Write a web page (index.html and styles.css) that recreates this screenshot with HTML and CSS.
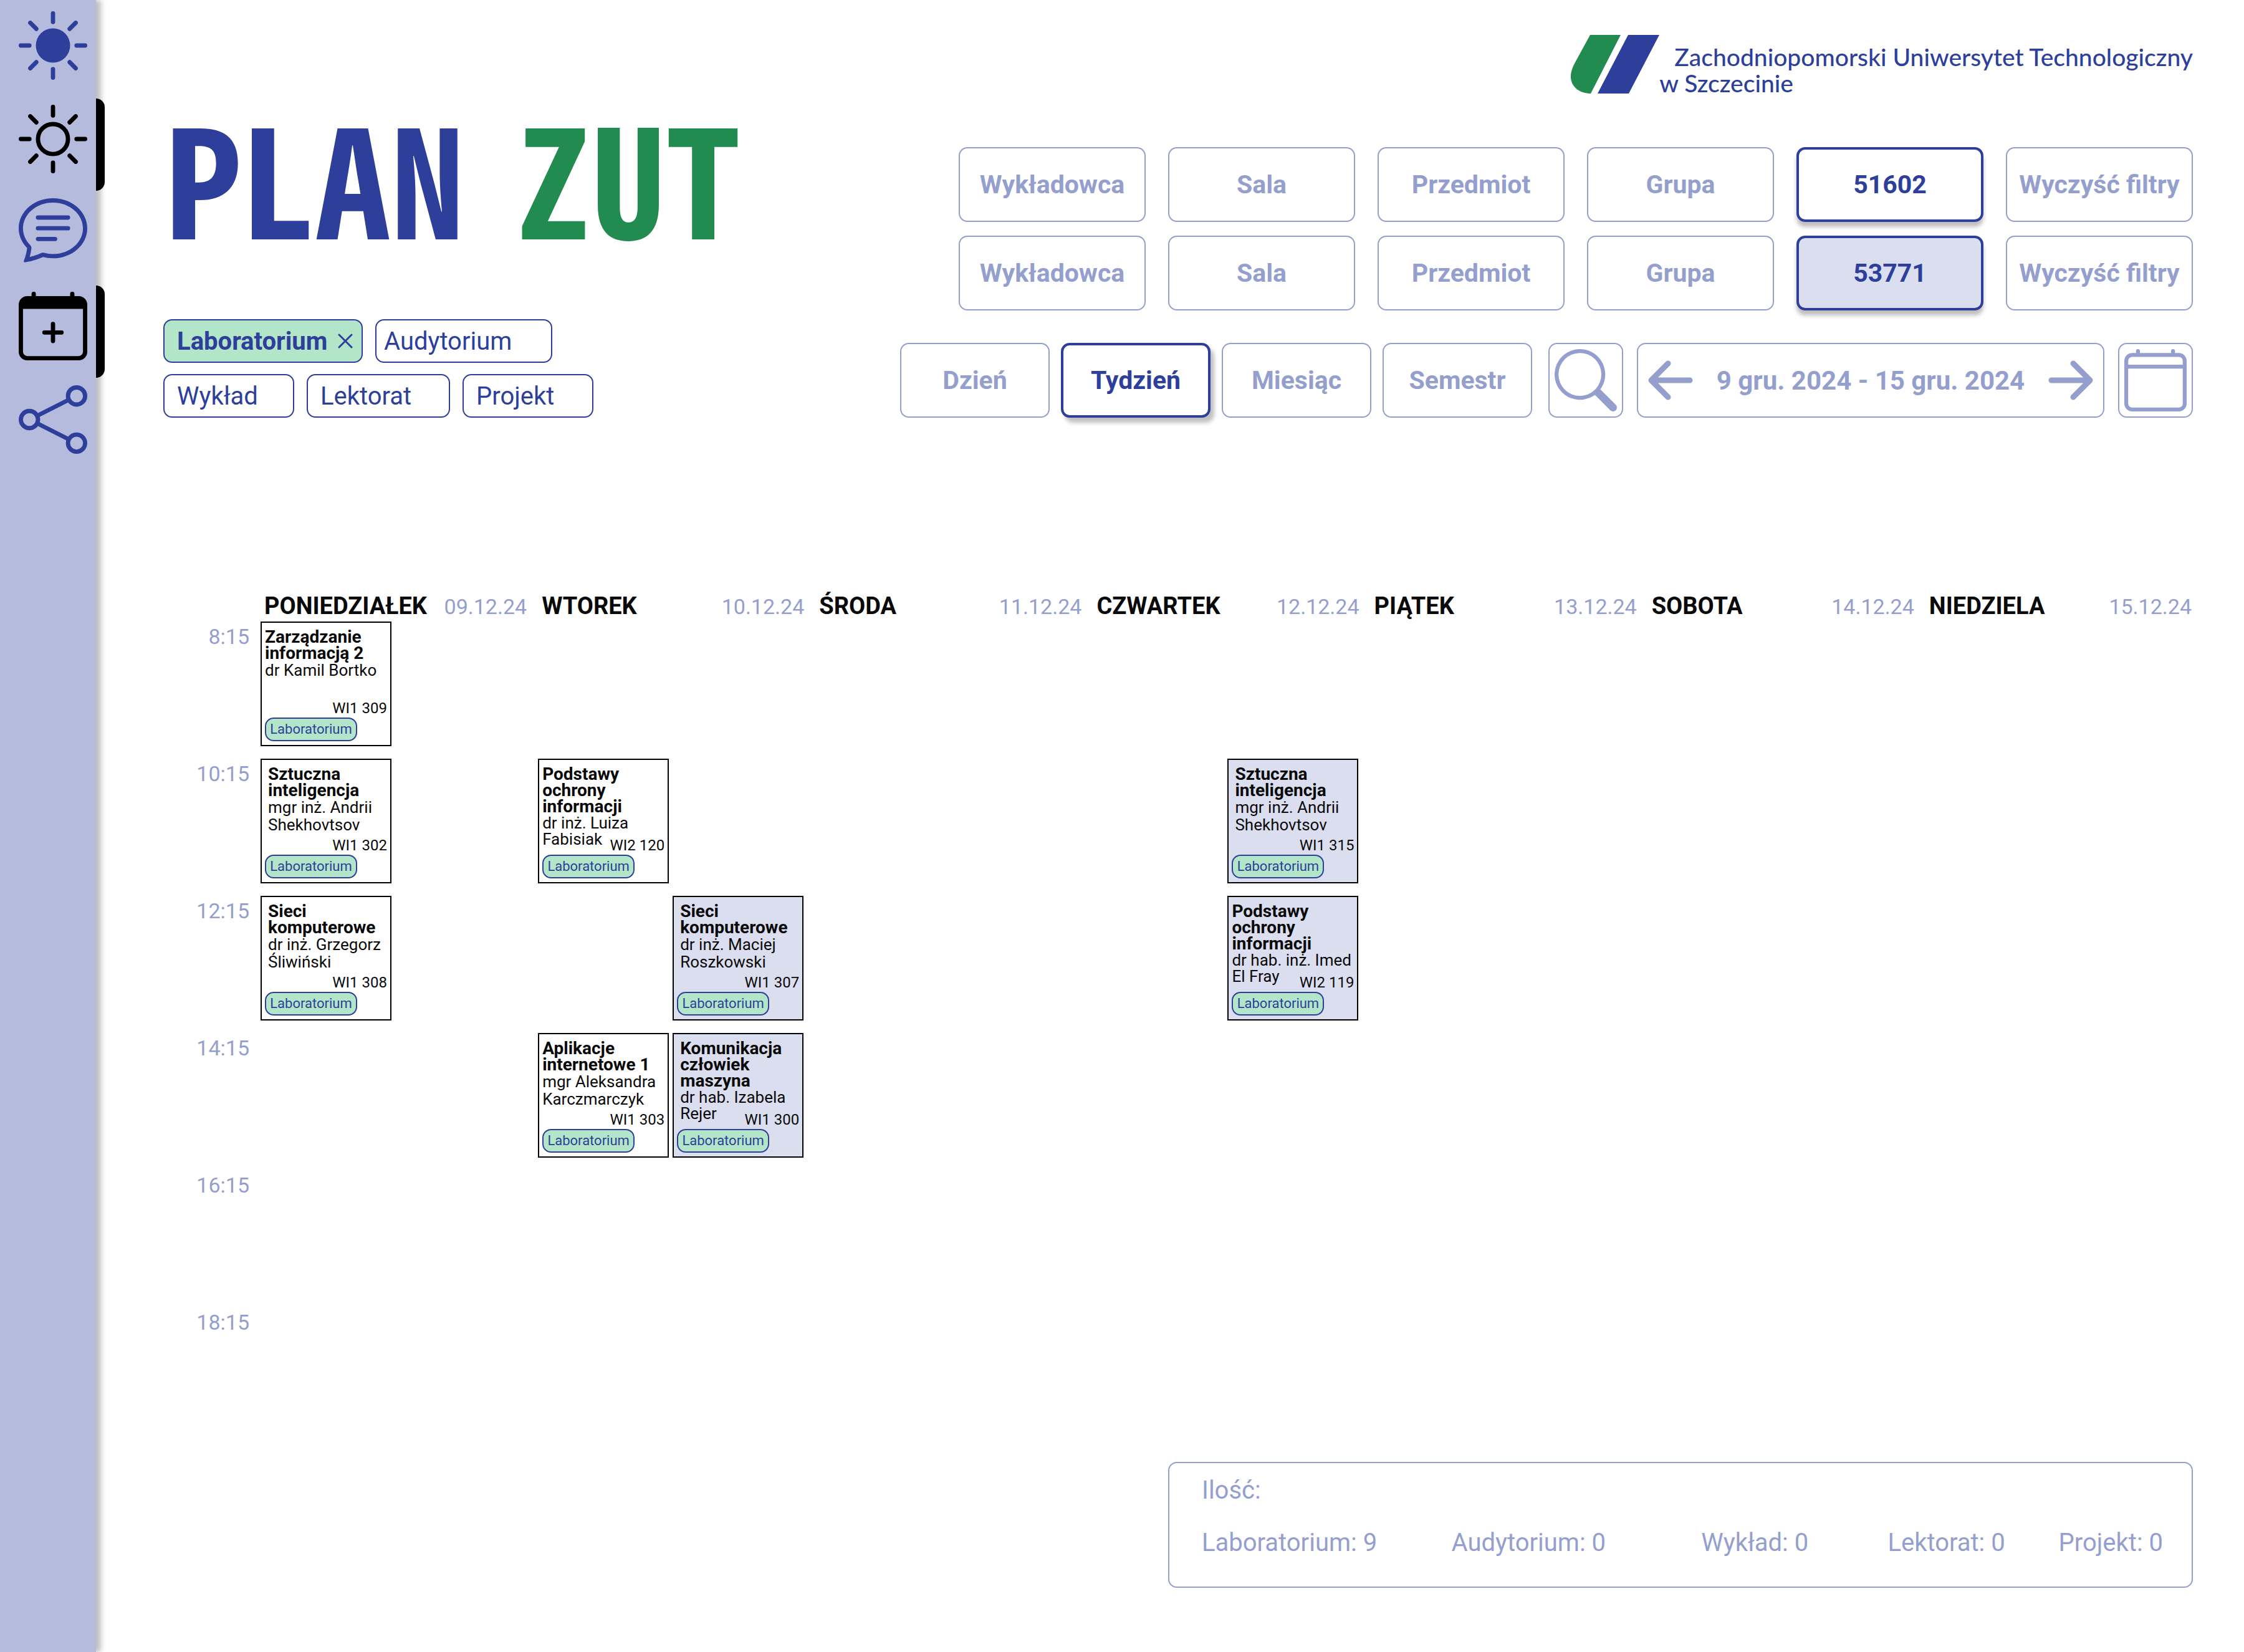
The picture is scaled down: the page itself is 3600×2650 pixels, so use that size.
FILE: index.html
```html
<!DOCTYPE html>
<html lang="pl">
<head>
<meta charset="utf-8">
<meta name="viewport" content="width=device-width, initial-scale=1">
<title>Plan ZUT</title>
<link rel="stylesheet" href="styles.css">
</head>
<body>
<nav class="sidebar" aria-label="Narzędzia">
  <button class="tool" type="button" aria-label="Motyw kolorowy">
    <svg class="icon" viewBox="0 0 16 16" fill="none" stroke="currentColor" stroke-linecap="round"><circle cx="8" cy="8" r="4" fill="currentColor" stroke="none"/><path d="M8 .5v2M8 13.5v2M.5 8h2M13.5 8h2M2.697 2.697l1.414 1.414M11.889 11.889l1.414 1.414M13.303 2.697l-1.414 1.414M4.111 11.889l-1.414 1.414"/></svg>
  </button>
  <button class="tool tool--active" type="button" aria-label="Jasny motyw" aria-pressed="true">
    <svg class="icon" viewBox="0 0 16 16" fill="none" stroke="currentColor" stroke-linecap="round"><circle cx="8" cy="8" r="3.5"/><path d="M8 .5v2M8 13.5v2M.5 8h2M13.5 8h2M2.697 2.697l1.414 1.414M11.889 11.889l1.414 1.414M13.303 2.697l-1.414 1.414M4.111 11.889l-1.414 1.414"/></svg>
  </button>
  <button class="tool" type="button" aria-label="Wiadomości">
    <svg class="icon" viewBox="0 1 16 16" fill="currentColor"><path d="M2.678 11.894a1 1 0 0 1 .287.801 11 11 0 0 1-.398 2c1.395-.323 2.247-.697 2.634-.893a1 1 0 0 1 .71-.074A8 8 0 0 0 8 14c3.996 0 7-2.807 7-6s-3.004-6-7-6-7 2.808-7 6c0 1.468.617 2.83 1.678 3.894m-.493 3.905a22 22 0 0 1-.713.129c-.2.032-.352-.176-.273-.362a10 10 0 0 0 .244-.637l.003-.01c.248-.72.45-1.548.524-2.319C.743 11.37 0 9.76 0 8c0-3.866 3.582-7 8-7s8 3.134 8 7-3.582 7-8 7a9 9 0 0 1-2.347-.306c-.52.263-1.639.742-3.468 1.105"/><path d="M4.5 5.5h7M4.5 8h7M4.5 10.500h4" stroke="currentColor" stroke-linecap="round"/></svg>
  </button>
  <button class="tool tool--active" type="button" aria-label="Dodaj do kalendarza" aria-pressed="true">
    <svg class="icon" viewBox="0 0 16 16" fill="currentColor"><path d="M8 7a.5.5 0 0 1 .5.5V9H10a.5.5 0 0 1 0 1H8.500v1.500a.5.5 0 0 1-1 0V10H6a.5.5 0 0 1 0-1h1.500V7.500A.5.5 0 0 1 8 7"/><path d="M3.500 0a.5.5 0 0 1 .5.5V1h8V.5a.5.5 0 0 1 1 0V1h1a2 2 0 0 1 2 2v11a2 2 0 0 1-2 2H2a2 2 0 0 1-2-2V3a2 2 0 0 1 2-2h1V.5a.5.5 0 0 1 .5-.5M1 4v10a1 1 0 0 0 1 1h12a1 1 0 0 0 1-1V4z"/></svg>
  </button>
  <button class="tool" type="button" aria-label="Udostępnij">
    <svg class="icon" viewBox="0 0 16 16" fill="none" stroke="currentColor"><circle cx="13.500" cy="2.500" r="2"/><circle cx="13.500" cy="13.500" r="2"/><circle cx="2.500" cy="8" r="2"/><path d="M4.300 7.120l7.400-3.740M4.300 8.880l7.400 3.740"/></svg>
  </button>
</nav>

<main class="page">
  <header class="header">
    <div class="intro">
      <h1 class="title"><span class="title__plan">PLAN</span> <span class="title__zut">ZUT</span></h1>
      <div class="types" role="group" aria-label="Rodzaj zajęć">
        <div class="types__row">
          <button class="type type--on" type="button" aria-pressed="true">Laboratorium<svg class="type__close" viewBox="0 0 24 24" fill="none" stroke="currentColor" stroke-width="3" stroke-linecap="round" aria-hidden="true"><path d="M2 2l20 20M22 2L2 22"/></svg></button>
          <button class="type type--lg" type="button">Audytorium</button>
        </div>
        <div class="types__row">
          <button class="type type--sm" type="button">Wykład</button>
          <button class="type type--md" type="button">Lektorat</button>
          <button class="type type--sm" type="button">Projekt</button>
        </div>
      </div>
    </div>

    <div class="controls">
      <div class="brand">
        <svg class="brand__mark" viewBox="0 0 142 94" aria-hidden="true"><path fill="#228b50" d="M31 0h49L32 94C10 94-6 78 2 55Q4 49 7 44z"/><path fill="#2d3f9b" d="M92 0h50L93 94H43z"/></svg>
        <p class="brand__name"><span class="brand__lead">Zachodniopomorski Uniwersytet Technologiczny</span><span>w Szczecinie</span></p>
      </div>

      <form class="filters">
        <input class="box field" type="text" placeholder="Wykładowca" aria-label="Wykładowca, plan 1">
        <input class="box field" type="text" placeholder="Sala" aria-label="Sala, plan 1">
        <input class="box field" type="text" placeholder="Przedmiot" aria-label="Przedmiot, plan 1">
        <input class="box field" type="text" placeholder="Grupa" aria-label="Grupa, plan 1">
        <input class="box field box--active" type="text" value="51602" aria-label="Numer albumu, plan 1">
        <button class="box" type="reset">Wyczyść filtry</button>
        <input class="box field" type="text" placeholder="Wykładowca" aria-label="Wykładowca, plan 2">
        <input class="box field" type="text" placeholder="Sala" aria-label="Sala, plan 2">
        <input class="box field" type="text" placeholder="Przedmiot" aria-label="Przedmiot, plan 2">
        <input class="box field" type="text" placeholder="Grupa" aria-label="Grupa, plan 2">
        <input class="box field box--active box--second" type="text" value="53771" aria-label="Numer albumu, plan 2">
        <button class="box" type="reset">Wyczyść filtry</button>
      </form>

      <div class="range">
        <div class="views" role="group" aria-label="Widok">
          <button class="box" type="button">Dzień</button>
          <button class="box box--active box--view" type="button" aria-pressed="true">Tydzień</button>
          <button class="box" type="button">Miesiąc</button>
          <button class="box" type="button">Semestr</button>
        </div>
        <div class="period">
          <button class="box" type="button" aria-label="Szukaj"><svg class="box__icon" viewBox="0 0 16 16" fill="currentColor"><path d="M11.742 10.344a6.500 6.500 0 1 0-1.397 1.398h-.001q.044.06.098.115l3.850 3.850a1 1 0 0 0 1.415-1.414l-3.850-3.850a1 1 0 0 0-.115-.1zM12 6.500a5.500 5.500 0 1 1-11 0 5.500 5.500 0 0 1 11 0"/></svg></button>
          <div class="box dates">
            <button class="arrow" type="button" aria-label="Poprzedni tydzień"><svg class="arrow__icon" viewBox="0 0 72 64" fill="none" stroke="currentColor" stroke-width="9" stroke-linecap="round" stroke-linejoin="round"><path d="M67 32H6M32 5L5 32l27 27"/></svg></button>
            <span>9 gru. 2024 - 15 gru. 2024</span>
            <button class="arrow" type="button" aria-label="Następny tydzień"><svg class="arrow__icon" viewBox="0 0 72 64" fill="none" stroke="currentColor" stroke-width="9" stroke-linecap="round" stroke-linejoin="round"><path d="M5 32h61M40 5l27 27-27 27"/></svg></button>
          </div>
          <button class="box" type="button" aria-label="Wybierz datę"><svg class="box__icon" viewBox="0 0 16 16" fill="currentColor"><path d="M3.500 0a.5.5 0 0 1 .5.5V1h8V.5a.5.5 0 0 1 1 0V1h1a2 2 0 0 1 2 2v11a2 2 0 0 1-2 2H2a2 2 0 0 1-2-2V3a2 2 0 0 1 2-2h1V.5a.5.5 0 0 1 .5-.5M2 2a1 1 0 0 0-1 1v1h14V3a1 1 0 0 0-1-1zm13 3H1v9a1 1 0 0 0 1 1h12a1 1 0 0 0 1-1z"/></svg></button>
        </div>
      </div>
    </div>
  </header>

  <table class="week">
    <thead>
      <tr>
        <td class="week__corner"></td>
        <th scope="col"><div class="day"><span>PONIEDZIAŁEK</span><time class="day__date">09.12.24</time></div></th>
        <th scope="col"><div class="day"><span>WTOREK</span><time class="day__date">10.12.24</time></div></th>
        <th scope="col"><div class="day"><span>ŚRODA</span><time class="day__date">11.12.24</time></div></th>
        <th scope="col"><div class="day"><span>CZWARTEK</span><time class="day__date">12.12.24</time></div></th>
        <th scope="col"><div class="day"><span>PIĄTEK</span><time class="day__date">13.12.24</time></div></th>
        <th scope="col"><div class="day"><span>SOBOTA</span><time class="day__date">14.12.24</time></div></th>
        <th scope="col"><div class="day"><span>NIEDZIELA</span><time class="day__date">15.12.24</time></div></th>
      </tr>
    </thead>
    <tbody>
      <tr>
        <th class="hour" scope="row">8:15</th>
        <td><div class="slots">
          <article class="card"><div class="card__info"><h2 class="card__name">Zarządzanie<br>informacją 2</h2><p class="card__who">dr Kamil Bortko</p></div><div class="card__foot"><span class="card__room">WI1 309</span><span class="tag">Laboratorium</span></div></article>
        </div></td>
        <td></td><td></td><td></td><td></td><td></td><td></td>
      </tr>
      <tr>
        <th class="hour" scope="row">10:15</th>
        <td><div class="slots">
          <article class="card card--inset"><div class="card__info"><h2 class="card__name">Sztuczna<br>inteligencja</h2><p class="card__who">mgr inż. Andrii<br>Shekhovtsov</p></div><div class="card__foot"><span class="card__room">WI1 302</span><span class="tag">Laboratorium</span></div></article>
        </div></td>
        <td><div class="slots">
          <article class="card card--tight"><div class="card__info"><h2 class="card__name">Podstawy<br>ochrony<br>informacji</h2><p class="card__who">dr inż. Luiza<br>Fabisiak</p></div><div class="card__foot"><span class="card__room">WI2 120</span><span class="tag">Laboratorium</span></div></article>
        </div></td>
        <td></td>
        <td><div class="slots">
          <article class="card card--second card--inset"><div class="card__info"><h2 class="card__name">Sztuczna<br>inteligencja</h2><p class="card__who">mgr inż. Andrii<br>Shekhovtsov</p></div><div class="card__foot"><span class="card__room">WI1 315</span><span class="tag">Laboratorium</span></div></article>
        </div></td>
        <td></td><td></td><td></td>
      </tr>
      <tr>
        <th class="hour" scope="row">12:15</th>
        <td><div class="slots">
          <article class="card card--inset"><div class="card__info"><h2 class="card__name">Sieci<br>komputerowe</h2><p class="card__who">dr inż. Grzegorz<br>Śliwiński</p></div><div class="card__foot"><span class="card__room">WI1 308</span><span class="tag">Laboratorium</span></div></article>
        </div></td>
        <td><div class="slots">
          <article class="card card--second card--inset"><div class="card__info"><h2 class="card__name">Sieci<br>komputerowe</h2><p class="card__who">dr inż. Maciej<br>Roszkowski</p></div><div class="card__foot"><span class="card__room">WI1 307</span><span class="tag">Laboratorium</span></div></article>
        </div></td>
        <td></td>
        <td><div class="slots">
          <article class="card card--second card--tight"><div class="card__info"><h2 class="card__name">Podstawy<br>ochrony<br>informacji</h2><p class="card__who">dr hab. inż. Imed<br>El Fray</p></div><div class="card__foot"><span class="card__room">WI2 119</span><span class="tag">Laboratorium</span></div></article>
        </div></td>
        <td></td><td></td><td></td>
      </tr>
      <tr>
        <th class="hour" scope="row">14:15</th>
        <td></td>
        <td><div class="slots">
          <article class="card"><div class="card__info"><h2 class="card__name">Aplikacje<br>internetowe 1</h2><p class="card__who">mgr Aleksandra<br>Karczmarczyk</p></div><div class="card__foot"><span class="card__room">WI1 303</span><span class="tag">Laboratorium</span></div></article>
          <article class="card card--second card--inset card--tight"><div class="card__info"><h2 class="card__name">Komunikacja<br>człowiek<br>maszyna</h2><p class="card__who">dr hab. Izabela<br>Rejer</p></div><div class="card__foot"><span class="card__room">WI1 300</span><span class="tag">Laboratorium</span></div></article>
        </div></td>
        <td></td><td></td><td></td><td></td><td></td>
      </tr>
      <tr><th class="hour" scope="row">16:15</th><td></td><td></td><td></td><td></td><td></td><td></td><td></td></tr>
      <tr><th class="hour" scope="row">18:15</th><td></td><td></td><td></td><td></td><td></td><td></td><td></td></tr>
    </tbody>
  </table>

  <section class="summary">
    <h2 class="summary__title">Ilość:</h2>
    <ul class="summary__list">
      <li>Laboratorium: 9</li>
      <li>Audytorium: 0</li>
      <li>Wykład: 0</li>
      <li>Lektorat: 0</li>
      <li>Projekt: 0</li>
    </ul>
  </section>
</main>
</body>
</html>
```
FILE: styles.css
```css
:root {
  --blue: #2d3f9b;
  --blue-soft: #959fce;
  --blue-bar: #b5bbdc;
  --blue-pale: #dbdeef;
  --green: #228b50;
  --green-pale: #b3e6c9;
}

* { box-sizing: border-box; }

body {
  margin: 0;
  min-height: 100vh;
  display: flex;
  background: #fff;
  color: #0a0a0a;
  font-family: Roboto, "Noto Sans", sans-serif;
  font-size: 40px;
}

h1, h2, p, ul { margin: 0; padding: 0; }

button, input { font: inherit; color: inherit; }

button { cursor: pointer; }

/* Sidebar */
.sidebar {
  flex: 0 0 154px;
  display: flex;
  flex-direction: column;
  gap: 40px;
  padding-top: 18px;
  background: var(--blue-bar);
  box-shadow: 8px 0 8px rgba(0, 0, 0, .25);
}

.tool {
  position: relative;
  display: block;
  width: 100%;
  height: 110px;
  padding: 0 14px 0 30px;
  border: 0;
  background: none;
  color: var(--blue);
}

.tool--active { color: #000; }

.tool--active::after {
  content: "";
  position: absolute;
  top: -10px;
  right: -14px;
  width: 14px;
  height: 148px;
  border-radius: 0 14px 14px 0;
  background: #000;
}

.icon { display: block; width: 110px; height: 110px; }

/* Page */
.page {
  flex: 1;
  min-width: 0;
  display: flex;
  flex-direction: column;
  padding: 56px 82px 56px 108px;
}

.header {
  display: grid;
  grid-template-columns: 1182fr 2074fr;
}

.intro {
  display: flex;
  flex-direction: column;
  justify-content: space-between;
}

.title {
  display: flex;
  gap: 82px;
  padding: 100px 0 0 4px;
  font-family: "Noto Sans CJK SC", sans-serif;
  font-size: 240px;
  line-height: 248px;
  font-weight: 700;
  font-feature-settings: "hwid";
  white-space: nowrap;
}

.title__plan { color: var(--blue); }
.title__zut { color: var(--green); }

.types { display: grid; gap: 18px; }

.types__row { display: flex; gap: 20px; }

.type {
  display: flex;
  align-items: center;
  height: 70px;
  padding: 0 20px;
  border: 2px solid var(--blue);
  border-radius: 14px;
  background: #fff;
  color: var(--blue);
}

.type--on {
  width: 320px;
  justify-content: space-between;
  padding-right: 14px;
  background: var(--green-pale);
  font-weight: 700;
}

.type--lg { width: 284px; padding: 0 12px; }
.type--md { width: 230px; }
.type--sm { width: 210px; }

.type__close { width: 24px; height: 24px; }

/* Controls */
.brand {
  display: flex;
  justify-content: flex-end;
  margin-bottom: 82px;
}

.brand__mark { width: 142px; height: 94px; }

.brand__name {
  display: flex;
  flex-direction: column;
  padding-top: 14px;
  color: var(--blue);
  font-family: Lato, sans-serif;
  font-size: 39px;
  line-height: 42px;
  font-weight: 500;
}

.brand__lead { padding-left: 24px; }

.filters {
  display: grid;
  grid-template-columns: repeat(6, 1fr);
  gap: 22px 36px;
  margin: 0 0 52px 94px;
}

.box {
  display: flex;
  align-items: center;
  justify-content: center;
  width: 100%;
  height: 120px;
  padding: 0;
  border: 2px solid var(--blue-soft);
  border-radius: 14px;
  background: #fff;
  color: var(--blue-soft);
  font-size: 41px;
  font-weight: 700;
  white-space: nowrap;
}

.field { text-align: center; }

.field::placeholder { color: var(--blue-soft); opacity: 1; }

.box--active {
  border: 4px solid var(--blue);
  color: var(--blue);
  box-shadow: 0 8px 6px rgba(0, 0, 0, .25);
}

.box--view { box-shadow: 6px 8px 6px rgba(0, 0, 0, .25); }

.box--second { background: var(--blue-pale); }

.box__icon { width: 100px; height: 100px; }

.range { display: grid; grid-template-columns: 1014fr 1034fr; gap: 26px; }

.views { display: grid; grid-template-columns: repeat(4, 1fr); gap: 18px; }

.period { display: grid; grid-template-columns: 120px 1fr 120px; gap: 22px; }

.dates {
  justify-content: space-between;
  padding: 0 16px;
  font-size: 42px;
}

.arrow { padding: 0; border: 0; background: none; color: inherit; }

.arrow__icon { display: block; width: 72px; height: 64px; }

/* Week grid */
.week {
  width: calc(100% + 16px);
  margin: 276px -16px 0 0;
  table-layout: fixed;
  border-collapse: collapse;
}

.week th, .week td {
  padding: 0;
  vertical-align: top;
  text-align: left;
}

.week thead tr { height: 50px; }
.week tbody tr { height: 220px; }

.week .week__corner { width: 156px; }

.day {
  display: flex;
  align-items: baseline;
  justify-content: space-between;
  padding: 2px 18px 0 6px;
  font-size: 38px;
  line-height: 48px;
  font-weight: 700;
}

.day__date { color: var(--blue-soft); font-size: 34px; font-weight: 400; }

.week .hour {
  padding: 4px 18px 0 0;
  text-align: right;
  color: var(--blue-soft);
  font-size: 34px;
  line-height: 40px;
  font-weight: 400;
}

.slots {
  display: grid;
  grid-template-columns: 210px 210px;
  gap: 6px;
}

.card {
  display: grid;
  height: 200px;
  border: 2px solid #000;
  background: #fff;
  white-space: nowrap;
}

.card--second { grid-column: 2; background: var(--blue-pale); }

.card__info, .card__foot { grid-area: 1 / 1; }

.card__info { padding: 10px 0 0 5px; }
.card--inset .card__info { padding-left: 10px; }

.card__name { font-size: 28px; line-height: 26px; font-weight: 700; }
.card__who { font-size: 26px; line-height: 28px; }
.card--tight .card__who { line-height: 26px; }

.card__foot {
  align-self: end;
  display: flex;
  flex-direction: column;
  padding: 0 5px 6px;
}

.card__room { align-self: flex-end; font-size: 24px; line-height: 30px; }

.tag {
  align-self: flex-start;
  width: 148px;
  border: 2px solid var(--blue);
  border-radius: 14px;
  background: var(--green-pale);
  color: var(--blue);
  font-size: 22px;
  line-height: 34px;
  text-align: center;
}

/* Summary */
.summary {
  align-self: flex-end;
  width: calc(50% + 16px);
  margin-top: 28px;
  padding: 20px 46px 46px 52px;
  border: 2px solid var(--blue-soft);
  border-radius: 14px;
  color: var(--blue-soft);
  line-height: 48px;
}

.summary__title { font-size: 40px; font-weight: 400; }

.summary__list {
  display: grid;
  grid-template-columns: 399fr 399fr 298fr 273fr auto;
  margin-top: 36px;
  list-style: none;
  white-space: nowrap;
}
```
